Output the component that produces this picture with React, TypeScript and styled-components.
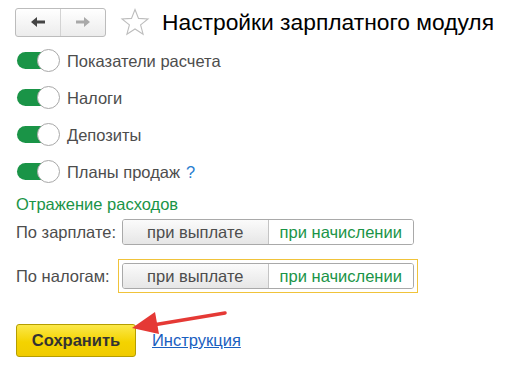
import React from "react";
import styled, { createGlobalStyle } from "styled-components";

const Global = createGlobalStyle`
  html, body { margin: 0; padding: 0; background: #fff; }
  body { font-family: "Liberation Sans", Arial, sans-serif; color: #4d4d4d; }
`;

const Page = styled.div`
  position: relative;
  width: 510px;
  height: 368px;
  padding: 7px 0 0 15px;
  box-sizing: border-box;
`;

const Header = styled.div`
  display: flex;
  align-items: center;
  height: 30px;
`;

const NavGroup = styled.div`
  display: flex;
  width: 91px;
  height: 29px;
  box-sizing: border-box;
  border: 1px solid #bcbcbc;
  border-radius: 3px;
  background: linear-gradient(#ffffff, #ececec);
`;

const NavBtn = styled.div<{ $first?: boolean }>`
  flex: 1;
  display: flex;
  align-items: center;
  justify-content: center;
  border-left: ${(p) => (p.$first ? "none" : "1px solid #d3d3d3")};
`;

const Star = styled.div`
  margin-left: 14px;
  display: flex;
`;

const Title = styled.h1`
  margin: 0 0 0 12px;
  font-size: 22.8px;
  font-weight: normal;
  color: #000;
  line-height: 30px;
`;

const Toggles = styled.div`
  display: flex;
  flex-direction: column;
  gap: 14px;
  margin-top: 12px;
  padding-left: 2px;
`;

const ToggleRow = styled.div`
  display: flex;
  align-items: center;
  height: 23px;
  gap: 6px;
`;

const Switch = styled.div`
  position: relative;
  width: 44px;
  height: 23px;
  flex: none;
`;

const Track = styled.div`
  position: absolute;
  left: 0;
  top: 3px;
  width: 34px;
  height: 17px;
  border-radius: 9px;
  background: #1a9447;
`;

const Knob = styled.div`
  position: absolute;
  left: 20px;
  top: 0;
  width: 21px;
  height: 21px;
  border-radius: 50%;
  background: #fff;
  border: 1px solid #a8a8a8;
`;

const Label = styled.span`
  font-size: 16.5px;
  color: #4d4d4d;
  line-height: 20px;
`;

const Help = styled.span`
  color: #2a7ed0;
  margin-left: 6px;
`;

const SectionTitle = styled.div`
  margin-top: 12px;
  font-size: 16.5px;
  color: #1a9447;
  line-height: 18px;
  margin-left: 1px;
`;

const Row = styled.div<{ $focus?: boolean }>`
  display: flex;
  align-items: center;
  margin-left: 1px;
  margin-top: ${(p) => (p.$focus ? "10px" : "2px")};
`;

const RowLabel = styled.span`
  width: 106px;
  font-size: 16.5px;
  color: #4d4d4d;
`;

const Focus = styled.div<{ $on?: boolean }>`
  padding: 3px;
  margin-left: -4px;
  border: 1px solid ${(p) => (p.$on ? "#f0c33a" : "transparent")};
`;

const Segmented = styled.div`
  display: flex;
  width: 292px;
  height: 26px;
  box-sizing: border-box;
  border: 1px solid #a9a9a9;
  border-radius: 3px;
  overflow: hidden;
`;

const Segment = styled.div<{ $active?: boolean }>`
  flex: 1;
  display: flex;
  align-items: center;
  justify-content: center;
  font-size: 16.5px;
  color: ${(p) => (p.$active ? "#1a9447" : "#4d4d4d")};
  background: ${(p) => (p.$active ? "#fff" : "linear-gradient(#fbfbfb, #e6e6e6)")};
  border-left: ${(p) => (p.$active ? "1px solid #c4c4c4" : "none")};
`;

const Footer = styled.div`
  display: flex;
  align-items: center;
  gap: 16px;
  margin-top: 31px;
  margin-left: 1px;
`;

const SaveBtn = styled.button`
  width: 120px;
  height: 33px;
  border: 1px solid #b59e00;
  border-radius: 3px;
  background: linear-gradient(#fbe84a, #f4d300 55%, #f0cb00);
  font-family: "Liberation Sans", Arial, sans-serif;
  font-size: 16.5px;
  font-weight: bold;
  color: #333;
  padding: 0;
`;

const Link = styled.a`
  font-size: 16.5px;
  color: #1a60c0;
  text-decoration: underline;
`;

const Arrow = styled.svg`
  position: absolute;
  left: 125px;
  top: 300px;
`;

const toggles = ["Показатели расчета", "Налоги", "Депозиты", "Планы продаж"];

export default function App() {
  return (
    <>
      <Global />
      <Page>
        <Header>
          <NavGroup>
            <NavBtn $first>
              <svg width="16" height="12" viewBox="0 0 16 12">
                <path d="M1 6 L7 1 V4.5 H15 V7.5 H7 V11 Z" fill="#444" />
              </svg>
            </NavBtn>
            <NavBtn>
              <svg width="16" height="12" viewBox="0 0 16 12">
                <path d="M15 6 L9 1 V4.5 H1 V7.5 H9 V11 Z" fill="#a9a9a9" />
              </svg>
            </NavBtn>
          </NavGroup>
          <Star>
            <svg width="30" height="28" viewBox="0 0 30 28">
              <path
                d="M15 1.5 L18.5 10.4 L28 10.9 L20.6 16.9 L23.1 26.2 L15 21 L6.9 26.2 L9.4 16.9 L2 10.9 L11.5 10.4 Z"
                fill="none"
                stroke="#bdbdbd"
                strokeWidth="1.1"
                strokeLinejoin="miter"
              />
            </svg>
          </Star>
          <Title>Настройки зарплатного модуля</Title>
        </Header>

        <Toggles>
          {toggles.map((t, i) => (
            <ToggleRow key={t}>
              <Switch>
                <Track />
                <Knob />
              </Switch>
              <Label>
                {t}
                {i === 3 && <Help>?</Help>}
              </Label>
            </ToggleRow>
          ))}
        </Toggles>

        <SectionTitle>Отражение расходов</SectionTitle>

        <Row>
          <RowLabel>По зарплате:</RowLabel>
          <Focus>
            <Segmented>
              <Segment>при выплате</Segment>
              <Segment $active>при начислении</Segment>
            </Segmented>
          </Focus>
        </Row>
        <Row $focus>
          <RowLabel>По налогам:</RowLabel>
          <Focus $on>
            <Segmented>
              <Segment>при выплате</Segment>
              <Segment $active>при начислении</Segment>
            </Segmented>
          </Focus>
        </Row>

        <Footer>
          <SaveBtn>Сохранить</SaveBtn>
          <Link href="#">Инструкция</Link>
        </Footer>

        <Arrow width="110" height="40" viewBox="0 0 110 40">
          <path d="M100 13 L28 25" stroke="#e53935" strokeWidth="3.5" strokeLinecap="round" />
          <path d="M7 28 L30 12 L34 34 Z" fill="#e53935" />
        </Arrow>
      </Page>
    </>
  );
}
